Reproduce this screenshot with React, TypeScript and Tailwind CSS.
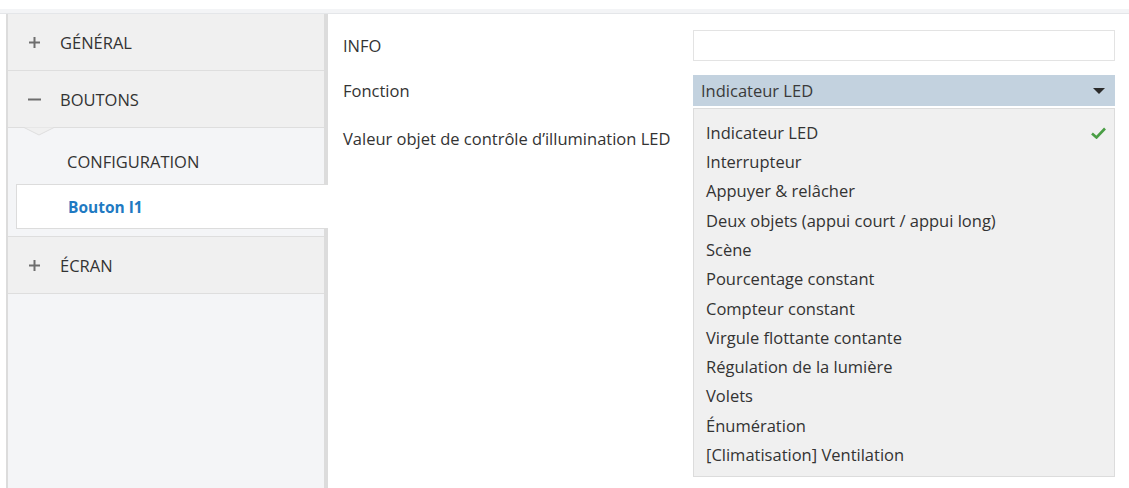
import React from "react";

const options = [
  "Indicateur LED",
  "Interrupteur",
  "Appuyer & relâcher",
  "Deux objets (appui court / appui long)",
  "Scène",
  "Pourcentage constant",
  "Compteur constant",
  "Virgule flottante contante",
  "Régulation de la lumière",
  "Volets",
  "Énumération",
  "[Climatisation] Ventilation",
];

function SectionHeader({ sign, label }: { sign: "+" | "-"; label: string }) {
  return (
    <div className="h-[57px] flex items-center bg-[#f0f0f0] border-b border-[#dedede]">
      <span className="w-[52px] flex justify-center pl-[1px]">
        {sign === "+" ? (
          <svg width="11" height="11" viewBox="0 0 11 11">
            <path d="M5.5 0v11M0 5.5h11" stroke="#6e6e6e" strokeWidth="2" />
          </svg>
        ) : (
          <svg width="13" height="11" viewBox="0 0 13 11">
            <path d="M0 5.5h13" stroke="#6e6e6e" strokeWidth="2" />
          </svg>
        )}
      </span>
      <span className="pt-[2px] text-[16.5px] text-[#333]">{label}</span>
    </div>
  );
}

export default function App() {
  return (
    <div
      className="w-[1129px] h-[488px] bg-white overflow-hidden flex flex-col"
      style={{ fontFamily: '"Open Sans", "Noto Sans", sans-serif' }}
    >
      <div className="h-[9px] shrink-0" />
      <div className="h-[4px] shrink-0 bg-[#f3f4f6]" />
      <div className="h-[1px] shrink-0 bg-[#e4e6e9]" />

      <div className="flex flex-1 min-h-0">
        {/* sidebar */}
        <aside className="ml-[6px] w-[322px] shrink-0 border-l-2 border-r-4 border-[#dcdcdc] bg-[#f4f5f7] flex flex-col">
          <SectionHeader sign="+" label="GÉNÉRAL" />
          <SectionHeader sign="-" label="BOUTONS" />
          <div className="relative">
            <svg className="absolute left-[16px] top-[-1px]" width="30" height="9" viewBox="0 0 30 9">
              <path d="M0 0.5 L15 8 L30 0.5" fill="#f0f0f0" stroke="#dedede" strokeWidth="1" />
            </svg>
            <div className="h-[56px] flex items-center pt-[12px] pl-[59px] text-[16.5px] text-[#333]">
              CONFIGURATION
            </div>
            <div className="ml-[8px] mr-[-4px] h-[45px] flex items-center pt-[2px] pl-[51px] bg-white border border-r-0 border-[#dcdcdc] text-[15.5px] font-bold text-[#1f7ac2]">
              Bouton I1
            </div>
            <div className="h-[7px]" />
          </div>
          <div className="border-t border-[#dedede]">
            <SectionHeader sign="+" label="ÉCRAN" />
          </div>
        </aside>

        {/* parameters */}
        <main className="flex-1 pl-[15px] pr-[14px] text-[16.5px] text-[#333]">
          <div className="flex items-center mt-[16px] h-[31px]">
            <span className="w-[350px] pt-[2px]">INFO</span>
            <div className="flex-1 h-[31px] border border-[#e3e3e3] bg-white" />
          </div>
          <div className="flex items-start mt-[14px]">
            <div className="w-[350px] shrink-0 flex flex-col">
              <span className="h-[31px] flex items-center pt-[2px]">Fonction</span>
              <span className="mt-[17px] h-[31px] flex items-center pt-[2px] whitespace-nowrap">
                Valeur objet de contrôle d’illumination LED
              </span>
            </div>
            <div className="flex-1 flex flex-col">
              <div className="h-[31px] bg-[#c3d2df] flex items-center justify-between pl-[8px] pr-[10px]">
                <span className="pt-[2px] text-[#3a3a3a]">Indicateur LED</span>
                <svg width="12" height="6" viewBox="0 0 12 6">
                  <path d="M0 0h12L6 6z" fill="#2b2b2b" />
                </svg>
              </div>
              <ul className="mt-[2px] h-[369px] bg-[#f0f0f0] border border-[#dcdcdc] pt-[9px] pl-[12px] pr-[8px]">
                {options.map((o, i) => (
                  <li key={o} className="h-[29.3px] flex items-center justify-between">
                    <span className="pt-[1px]">{o}</span>
                    {i === 0 && (
                      <svg width="15" height="12" viewBox="0 0 15 12">
                        <path d="M1 6.5 L5.5 10.5 L14 1.5" fill="none" stroke="#4a9e45" strokeWidth="2.6" />
                      </svg>
                    )}
                  </li>
                ))}
              </ul>
            </div>
          </div>
        </main>
      </div>
    </div>
  );
}
